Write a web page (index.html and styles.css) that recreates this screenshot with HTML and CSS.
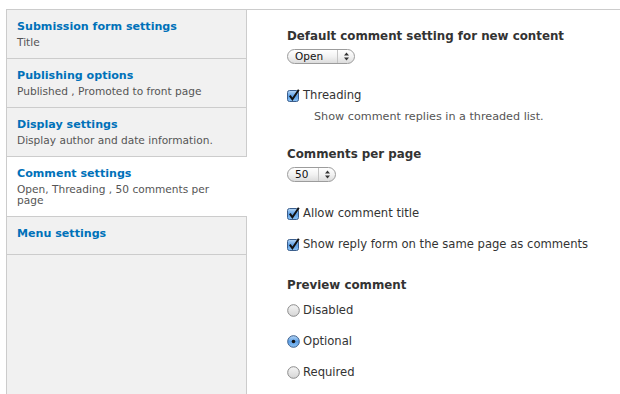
FILE: index.html
```html
<!DOCTYPE html>
<html lang="en">
<head>
    <meta charset="UTF-8">
    <title>Comment settings</title>
    <link rel="stylesheet" href="styles.css">
</head>
<body>

    <!-- shared gradients for the form controls -->
    <svg class="defs" width="0" height="0" aria-hidden="true">
        <defs>
            <linearGradient id="blue" x1="0" y1="0" x2="0" y2="1">
                <stop offset="0" stop-color="#b9d8f6"/>
                <stop offset="0.5" stop-color="#5c9fe6"/>
                <stop offset="1" stop-color="#8cc3f5"/>
            </linearGradient>
            <linearGradient id="grey" x1="0" y1="0" x2="0" y2="1">
                <stop offset="0" stop-color="#f4f4f4"/>
                <stop offset="1" stop-color="#d6d6d6"/>
            </linearGradient>
        </defs>
    </svg>

    <div class="vertical-tabs">
        <ul class="tabs-list">
            <li>
                <a href="#">Submission form settings</a>
                <span class="summary">Title</span>
            </li>
            <li>
                <a href="#">Publishing options</a>
                <span class="summary">Published , Promoted to front page</span>
            </li>
            <li>
                <a href="#">Display settings</a>
                <span class="summary">Display author and date information.</span>
            </li>
            <li class="selected">
                <a href="#">Comment settings</a>
                <span class="summary">Open, Threading , 50 comments per page</span>
            </li>
            <li class="no-summary">
                <a href="#">Menu settings</a>
            </li>
        </ul>

        <div class="tab-pane">
            <div class="form-item">
                <label class="item-label">Default comment setting for new content</label>
                <span class="select">
                    <span class="select-value wide">Open</span>
                    <span class="select-arrows">
                        <svg width="7" height="9" viewBox="0 0 7 9"><path d="M3.5 0.5 L6 3.5 H1 Z M3.5 8.5 L6 5.5 H1 Z" fill="#333"/></svg>
                    </span>
                </span>
            </div>

            <div class="form-item check gap-23">
                <svg class="box" width="13" height="13" viewBox="0 0 13 13"><rect x="0.5" y="1.5" width="11" height="11" rx="2" fill="url(#blue)" stroke="#3b5e8c"/><path d="M2.8 6.6 L5.4 10.2 L11.8 0.8" stroke="#111" stroke-width="2" fill="none"/></svg>
                <span>Threading</span>
            </div>
            <div class="description">Show comment replies in a threaded list.</div>

            <div class="form-item gap-21">
                <label class="item-label">Comments per page</label>
                <span class="select">
                    <span class="select-value">50</span>
                    <span class="select-arrows">
                        <svg width="7" height="9" viewBox="0 0 7 9"><path d="M3.5 0.5 L6 3.5 H1 Z M3.5 8.5 L6 5.5 H1 Z" fill="#333"/></svg>
                    </span>
                </span>
            </div>

            <div class="form-item check gap-23">
                <svg class="box" width="13" height="13" viewBox="0 0 13 13"><rect x="0.5" y="1.5" width="11" height="11" rx="2" fill="url(#blue)" stroke="#3b5e8c"/><path d="M2.8 6.6 L5.4 10.2 L11.8 0.8" stroke="#111" stroke-width="2" fill="none"/></svg>
                <span>Allow comment title</span>
            </div>

            <div class="form-item check gap-15">
                <svg class="box" width="13" height="13" viewBox="0 0 13 13"><rect x="0.5" y="1.5" width="11" height="11" rx="2" fill="url(#blue)" stroke="#3b5e8c"/><path d="M2.8 6.6 L5.4 10.2 L11.8 0.8" stroke="#111" stroke-width="2" fill="none"/></svg>
                <span>Show reply form on the same page as comments</span>
            </div>

            <label class="item-label gap-25">Preview comment</label>

            <div class="form-item check gap-9">
                <svg class="box" width="13" height="13" viewBox="0 0 13 13"><circle cx="6.5" cy="6.5" r="5.8" fill="url(#grey)" stroke="#8a8a8a"/></svg>
                <span>Disabled</span>
            </div>
            <div class="form-item check gap-15">
                <svg class="box" width="13" height="13" viewBox="0 0 13 13"><circle cx="6.5" cy="6.5" r="5.8" fill="url(#blue)" stroke="#3b5e8c"/><circle cx="6.5" cy="6.5" r="1.8" fill="#111"/></svg>
                <span>Optional</span>
            </div>
            <div class="form-item check gap-15">
                <svg class="box" width="13" height="13" viewBox="0 0 13 13"><circle cx="6.5" cy="6.5" r="5.8" fill="url(#grey)" stroke="#8a8a8a"/></svg>
                <span>Required</span>
            </div>
        </div>
    </div>

</body>
</html>
```

FILE: styles.css
```css
/* Base */
body {
    margin: 0;
    font-family: "DejaVu Sans", Verdana, sans-serif;
    color: #333;
    background-color: #fff;
}

.defs {
    position: absolute;
}

/* Vertical tabs wrapper */
.vertical-tabs {
    display: flex;
    margin: 9px 0 0 6px;
    min-height: calc(100vh - 9px);
    border-top: 1px solid #ccc;
    border-left: 1px solid #ccc;
    box-sizing: border-box;
}

.tabs-list {
    list-style: none;
    margin: 0;
    padding: 0;
    width: 239px;
    flex-shrink: 0;
    background-color: #f1f1f1;
    border-right: 1px solid #ccc;
}

.tabs-list li {
    padding: 9px 10px 10px;
    border-bottom: 1px solid #ccc;
}

.tabs-list li.selected {
    background-color: #fff;
    margin-right: -1px;
}

.tabs-list li.no-summary {
    padding-bottom: 12px;
}

.tabs-list a {
    display: block;
    font-size: 11.1px;
    font-weight: bold;
    line-height: 16px;
    color: #0071b9;
    text-decoration: none;
}

.tabs-list .summary {
    display: block;
    margin-top: 2px;
    font-size: 10.6px;
    line-height: 11px;
    color: #555;
}

/* Pane content */
.tab-pane {
    flex: 1;
    padding: 18px 0 0 40px;
    display: flex;
    flex-direction: column;
    align-items: flex-start;
}

.item-label {
    display: block;
    font-size: 11.85px;
    font-weight: bold;
    line-height: 16px;
    color: #333;
}

.form-item {
    display: flex;
    flex-direction: column;
    align-items: flex-start;
}

.form-item.check {
    flex-direction: row;
    align-items: center;
    gap: 3px;
    font-size: 11.6px;
    line-height: 16px;
    color: #333;
}

.box {
    flex-shrink: 0;
}

.description {
    margin: 6px 0 0 27px;
    font-size: 11.2px;
    line-height: 16px;
    color: #555;
}

.gap-9 { margin-top: 9px; }
.gap-15 { margin-top: 15px; }
.gap-21 { margin-top: 21px; }
.gap-23 { margin-top: 23px; }
.gap-25 { margin-top: 25px; }

/* Aqua style pop-up */
.select {
    display: inline-flex;
    align-items: stretch;
    margin-top: 5px;
    height: 15px;
    border: 1px solid #9c9c9c;
    border-radius: 8px;
    background: linear-gradient(#ffffff, #f2f2f2 50%, #dcdcdc);
    box-sizing: border-box;
    font-size: 10.5px;
    line-height: 13px;
    color: #111;
}

.select-value {
    padding: 0 9px 0 7px;
    min-width: 14px;
}

.select-value.wide {
    width: 33px;
}

.select-arrows {
    display: flex;
    align-items: center;
    justify-content: center;
    width: 16px;
    border-left: 1px solid #c4c4c4;
}
```
